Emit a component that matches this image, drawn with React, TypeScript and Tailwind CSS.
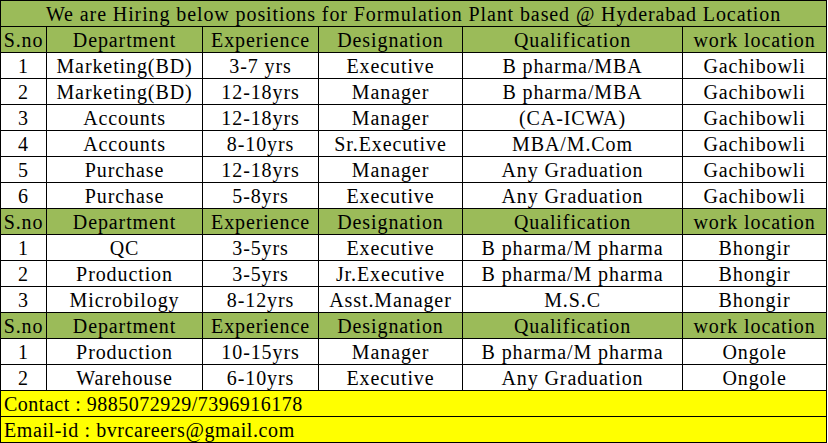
import React from "react";

type Row = [string, string, string, string, string, string];

const header: Row = ["S.no", "Department", "Experience", "Designation", "Qualification", "work location"];

const groups: Row[][] = [
  [
    ["1", "Marketing(BD)", "3-7 yrs", "Executive", "B pharma/MBA", "Gachibowli"],
    ["2", "Marketing(BD)", "12-18yrs", "Manager", "B pharma/MBA", "Gachibowli"],
    ["3", "Accounts", "12-18yrs", "Manager", "(CA-ICWA)", "Gachibowli"],
    ["4", "Accounts", "8-10yrs", "Sr.Executive", "MBA/M.Com", "Gachibowli"],
    ["5", "Purchase", "12-18yrs", "Manager", "Any Graduation", "Gachibowli"],
    ["6", "Purchase", "5-8yrs", "Executive", "Any Graduation", "Gachibowli"],
  ],
  [
    ["1", "QC", "3-5yrs", "Executive", "B pharma/M pharma", "Bhongir"],
    ["2", "Production", "3-5yrs", "Jr.Executive", "B pharma/M pharma", "Bhongir"],
    ["3", "Microbilogy", "8-12yrs", "Asst.Manager", "M.S.C", "Bhongir"],
  ],
  [
    ["1", "Production", "10-15yrs", "Manager", "B pharma/M pharma", "Ongole"],
    ["2", "Warehouse", "6-10yrs", "Executive", "Any Graduation", "Ongole"],
  ],
];

const cell = "border border-black h-[26px] p-0 text-center align-middle leading-none whitespace-nowrap overflow-hidden";

export default function App() {
  return (
    <div
      className="w-[828px] h-[443px] bg-white text-black overflow-hidden"
      style={{ fontFamily: '"Liberation Serif", serif' }}
    >
      <table className="table-fixed border-collapse w-[826px] text-[20px] tracking-[0.9px]">
        <colgroup>
          <col className="w-[46px]" />
          <col className="w-[156px]" />
          <col className="w-[116px]" />
          <col className="w-[144px]" />
          <col className="w-[220px]" />
          <col className="w-[144px]" />
        </colgroup>
        <tbody>
          <tr className="bg-[#9bbb59]">
            <td colSpan={6} className={cell}>
              We are Hiring below positions for Formulation Plant based @ Hyderabad Location
            </td>
          </tr>
          {groups.map((g, gi) => (
            <React.Fragment key={gi}>
              <tr className="bg-[#9bbb59]">
                {header.map((h, i) => (
                  <td key={i} className={cell}>
                    {h}
                  </td>
                ))}
              </tr>
              {g.map((r, ri) => (
                <tr key={ri} className="bg-white">
                  {r.map((c, ci) => (
                    <td key={ci} className={cell}>
                      {c}
                    </td>
                  ))}
                </tr>
              ))}
            </React.Fragment>
          ))}
          <tr className="bg-[#ffff00]">
            <td colSpan={6} className={cell + " text-left pl-[3px] tracking-[0.5px]"}>
              Contact : 9885072929/7396916178
            </td>
          </tr>
          <tr className="bg-[#ffff00]">
            <td colSpan={6} className={cell + " text-left pl-[3px] tracking-[0.6px]"}>
              Email-id : bvrcareers@gmail.com
            </td>
          </tr>
        </tbody>
      </table>
    </div>
  );
}
